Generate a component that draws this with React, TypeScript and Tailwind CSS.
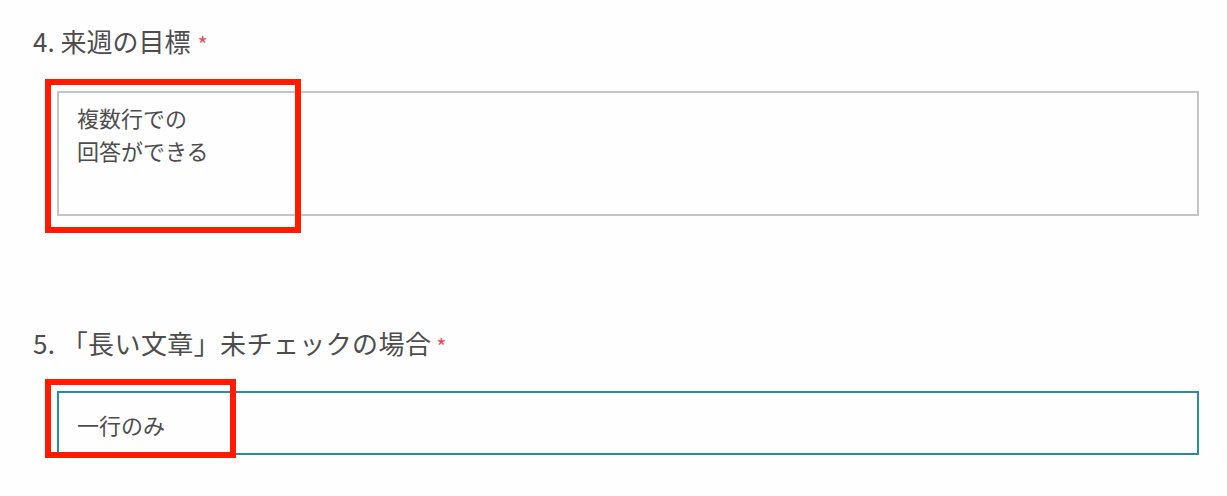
import React from "react";

export default function App() {
  return (
    <div className="relative w-[1227px] h-[496px] overflow-hidden bg-[#fefefe] text-[#4d4d4d] font-['Noto_Sans_CJK_JP','Noto_Sans',sans-serif]">
      <div className="flex flex-col pl-[33px] pt-[23px]">
        <div className="flex items-start text-[26px] leading-[36px] h-[36px]">
          <span>4. 来週の目標</span>
          <span className="ml-[7px] text-[22px] leading-[40px] text-[#e0505c]">*</span>
        </div>
        <div className="ml-[24px] mr-[28px] mt-[32px] h-[125px] border-2 border-[#c4c4c4] pl-[18px] pt-[8px] text-[22px] leading-[33px]">
          <div>複数行での</div>
          <div>回答ができる</div>
        </div>
        <div className="mt-[109px] flex items-start text-[26px] leading-[36px] h-[36px]">
          <span className="tracking-[0.4px]">5. 「長い文章」未チェックの場合</span>
          <span className="ml-[5px] text-[22px] leading-[40px] text-[#e0505c]">*</span>
        </div>
        <div className="ml-[24px] mr-[28px] mt-[30px] h-[64px] border-2 border-[#2b8c9b] pl-[18px] pt-[2px] flex items-center text-[22px] leading-[33px]">
          一行のみ
        </div>
      </div>
      <div className="absolute left-[45px] top-[79px] w-[256px] h-[154px] border-[6px] border-[#ff1a00]" />
      <div className="absolute left-[45px] top-[379px] w-[191px] h-[79px] border-[6px] border-[#ff1a00]" />
    </div>
  );
}
